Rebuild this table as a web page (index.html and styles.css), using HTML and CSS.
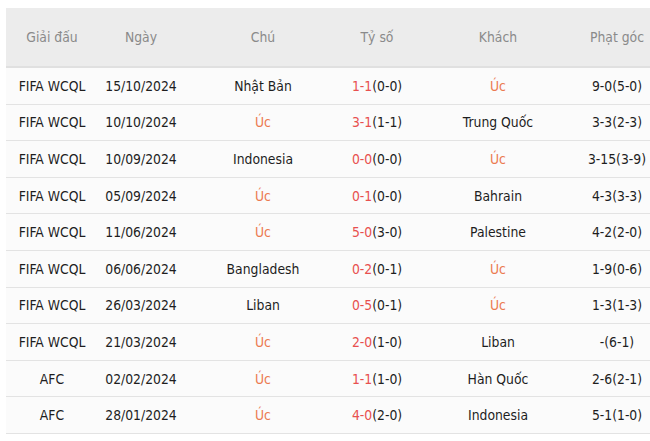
FILE: index.html
```html
<!DOCTYPE html>
<html lang="vi">
<head>
<meta charset="utf-8">
<link rel="stylesheet" href="styles.css">
</head>
<body>
<table class="matches">
  <colgroup>
    <col class="c1"><col class="c2"><col class="c3"><col class="c4"><col class="c5"><col class="c6">
  </colgroup>
  <thead>
    <tr><th>Giải đấu</th><th>Ngày</th><th>Chú</th><th>Tỷ số</th><th>Khách</th><th>Phạt góc</th></tr>
  </thead>
  <tbody>
    <tr><td>FIFA WCQL</td><td>15/10/2024</td><td>Nhật Bản</td><td><span class="ft">1-1</span>(0-0)</td><td class="team">Úc</td><td>9-0(5-0)</td></tr>
    <tr><td>FIFA WCQL</td><td>10/10/2024</td><td class="team">Úc</td><td><span class="ft">3-1</span>(1-1)</td><td>Trung Quốc</td><td>3-3(2-3)</td></tr>
    <tr><td>FIFA WCQL</td><td>10/09/2024</td><td>Indonesia</td><td><span class="ft">0-0</span>(0-0)</td><td class="team">Úc</td><td>3-15(3-9)</td></tr>
    <tr><td>FIFA WCQL</td><td>05/09/2024</td><td class="team">Úc</td><td><span class="ft">0-1</span>(0-0)</td><td>Bahrain</td><td>4-3(3-3)</td></tr>
    <tr><td>FIFA WCQL</td><td>11/06/2024</td><td class="team">Úc</td><td><span class="ft">5-0</span>(3-0)</td><td>Palestine</td><td>4-2(2-0)</td></tr>
    <tr><td>FIFA WCQL</td><td>06/06/2024</td><td>Bangladesh</td><td><span class="ft">0-2</span>(0-1)</td><td class="team">Úc</td><td>1-9(0-6)</td></tr>
    <tr><td>FIFA WCQL</td><td>26/03/2024</td><td>Liban</td><td><span class="ft">0-5</span>(0-1)</td><td class="team">Úc</td><td>1-3(1-3)</td></tr>
    <tr><td>FIFA WCQL</td><td>21/03/2024</td><td class="team">Úc</td><td><span class="ft">2-0</span>(1-0)</td><td>Liban</td><td>-(6-1)</td></tr>
    <tr><td>AFC</td><td>02/02/2024</td><td class="team">Úc</td><td><span class="ft">1-1</span>(1-0)</td><td>Hàn Quốc</td><td>2-6(2-1)</td></tr>
    <tr><td>AFC</td><td>28/01/2024</td><td class="team">Úc</td><td><span class="ft">4-0</span>(2-0)</td><td>Indonesia</td><td>5-1(1-0)</td></tr>
  </tbody>
</table>
</body>
</html>
```

FILE: styles.css
```css
html, body {
  margin: 0;
  background: #ffffff;
}
body {
  padding: 8px 0 0 6px;
  font-family: "DejaVu Sans Condensed", "DejaVu Sans", sans-serif;
  font-size: 13.8px;
  color: #1e1e1e;
}
.matches {
  border-collapse: collapse;
  table-layout: fixed;
  width: 644px;
}
.c1 { width: 92px; }
.c2 { width: 86px; }
.c3 { width: 158px; }
.c4 { width: 70px; }
.c5 { width: 172px; }
.c6 { width: 66px; }
.matches th {
  background: #ececec;
  color: #8a8a8a;
  font-weight: normal;
  height: 58px;
  padding: 0;
  text-align: center;
  border-bottom: 2px solid #e0e0e0;
}
.matches td {
  background: #fbfbfb;
  height: 35.6px;
  padding: 0;
  text-align: center;
  white-space: nowrap;
  border-bottom: 1px solid #e3e3e3;
}
.ft { color: #e8504f; }
.team { color: #eb7a50; }
```
